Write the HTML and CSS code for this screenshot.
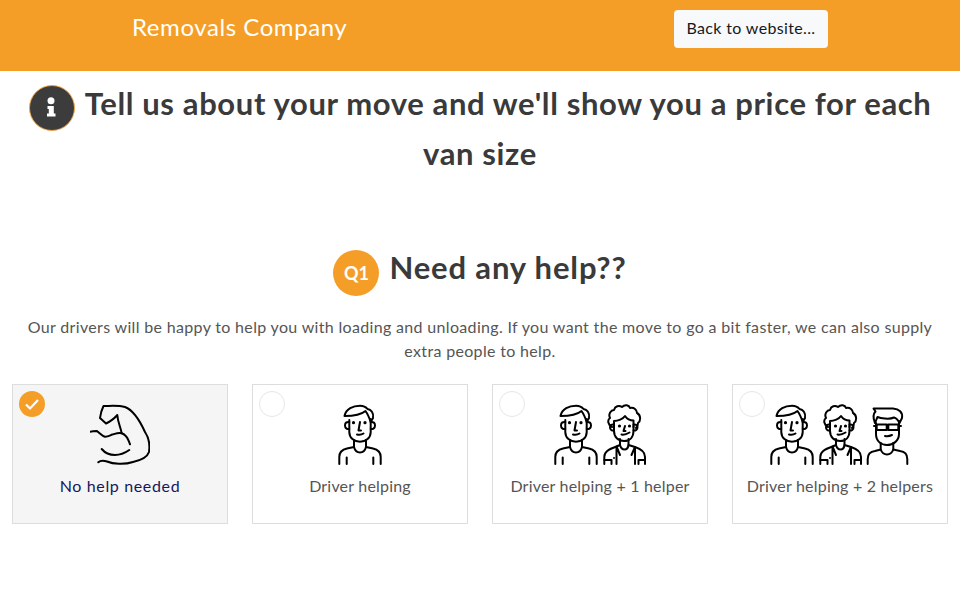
FILE: index.html
```html
<!DOCTYPE html>
<html lang="en">
<head>
<meta charset="utf-8">
<title>Removals Company</title>
<link rel="stylesheet" href="styles.css">
</head>
<body>
<svg class="defs" width="0" height="0" aria-hidden="true">
  <symbol id="man" viewBox="1 2 48 62">
    <g class="ink">
      <path d="M4.300 62V55C4.300 50 7.500 47.500 12 46.500L19 45C20 49 22 50.500 25 50.500C28 50.500 30 49 31 45L38 46.500C42.500 47.500 45.700 50 45.700 55V62"/>
      <path d="M11.700 55.500V62M38.300 55.500V62M19 38V45M31 38V45"/>
      <path d="M14.300 18V30C14.300 36 19 39.700 25 39.700C31 39.700 35.700 36 35.700 30V17"/>
      <path d="M9.500 14C11 7 18 3.700 25 3.700C29 3.700 31 5 32.500 7C36 7.500 39 11 38 16L35.700 20C34 15 32 11 30.500 9C27 12 18 14 9.500 14Z"/>
      <path d="M14.300 20C11.500 19.500 10 21 10 23.500C10 26 12 27.500 14.300 27M35.700 20C38.500 19.500 40 21 40 23.500C40 26 38 27.500 35.700 27"/>
      <path d="M25 20L23.500 28.500H26M22 32.500C24 33 27 32.500 28.500 31.500"/>
    </g>
    <circle class="dot" cx="18.500" cy="20.700" r="1.600"/>
    <circle class="dot" cx="30" cy="20.700" r="1.600"/>
  </symbol>
  <symbol id="curly" viewBox="1 2 48 62">
    <g class="ink">
      <path d="M13 25C9 23 8 18 11 16C9 12 12 8 15 8C16 4 20 3 23 5C26 2 30 3 31 6C35 5 38 8 38 11C42 13 42 19 39 21C39 23 38 25 37 26"/>
      <path d="M15 25V19C19 19 24 17 26 14C28 17 31 18.500 34.500 18.500V25"/>
      <path d="M15 24V29C15 35 19 39 25 39C31 39 34.500 35 34.500 29V24"/>
      <path d="M15 22.500C12.500 22 11 23.500 11 25.500C11 27.500 13 29 15 28.500M34.500 22.500C37 22 38.500 23.500 38.500 25.500C38.500 27.500 36.500 29 34.500 28.500"/>
      <path d="M26 24L24.500 29H26.500M22.500 32.500C25 33 28 32 30.500 30.500"/>
      <path d="M21 37V43M29.500 37V43"/>
      <path d="M5.300 62V55C5.300 50 9 47.500 17.500 44.500L21 43C22 46.500 23.500 47.500 25.500 47.500C27.500 47.500 29 46.500 29.500 43L36 45C42.500 47 46 50 46 55V62"/>
      <path d="M17.500 44.500L17.500 62M36 45V62M17.500 44.500L21 53M36 45L32.500 53M5.300 58H12.500V62M46 58H39.500V62"/>
    </g>
    <circle class="dot" cx="20.500" cy="24" r="1.600"/>
    <circle class="dot" cx="30.500" cy="24" r="1.600"/>
    <circle class="dot" cx="15" cy="56" r="1"/>
  </symbol>
  <symbol id="glasses" viewBox="1 2 48 62">
    <g class="ink">
      <path d="M4.700 62V57C4.700 52 7.500 49.500 12 49L17.700 47.500C19 51 21 52.500 24 52.500C27 52.500 29 51 30.300 47.500L37 49C41.500 49.500 44.300 52 44.300 57V62"/>
      <path d="M17.700 41V47.500M30.300 41V47.500"/>
      <path d="M13 21V32C13 39 18 43 24 43C30 43 36 39 36 32V19"/>
      <path d="M12 21C9.500 15 11 11 12.500 9.500L10.500 6.500H30C36 7 40 10 39 16L36.500 21C35 18 33 16 31 15.500C26 18 17 16 14.500 15C13.500 17 13 19 12 21Z"/>
      <path d="M13.700 22.500H23.700V28H13.700ZM25.300 22.500H35.300V28H25.300ZM23.700 24H25.300M13.700 24H11M35.300 24H38"/>
      <path d="M22 34C24.500 34.500 27 34 29 33"/>
    </g>
  </symbol>
</svg>

<header class="topbar">
  <span class="brand">Removals Company</span>
  <a class="back" href="#">Back to website...</a>
</header>

<main class="page">
  <h1 class="title">
    <svg class="info" viewBox="0 0 46 46" width="46" height="46" aria-hidden="true">
      <circle class="info-disc" cx="23" cy="23" r="22.500"/>
      <circle class="info-glyph" cx="22" cy="15.700" r="3.500"/>
      <path class="info-glyph" d="M18.500 21H24.800V28.500H26.500V31.500H18V28.500H19.800V24H18.500Z"/>
    </svg>
    Tell us about your move and we'll show you a price for each van size
  </h1>

  <h2 class="question"><span class="q-badge">Q1</span><span>Need any help??</span></h2>

  <p class="intro">Our drivers will be happy to help you with loading and unloading. If you want the move to go a bit faster, we can also supply extra people to help.</p>

  <div class="options">
    <div class="card selected">
      <span class="tick">
        <svg viewBox="0 0 26 26" width="26" height="26" aria-hidden="true"><path d="M7 13.500L11 17.500L19 9"/></svg>
      </span>
      <div class="art">
        <svg class="arm" viewBox="0 -1 60 62" width="60" height="62" aria-hidden="true">
          <g class="ink">
            <path d="M8.300 57.300C11 55 14 55.700 17 56.500C23 59 34 60 43 57C50 55.500 57 53 59 47C60 40 59 33 55 27C50 16 43 5 35 2C28 0 20 1 13.500 1C12 4 10.500 9 10 13L16 18.500C19 17 24 14 27.300 10C28 18 30 20 31.700 28.300"/>
            <path d="M0 26.700C2.500 26 4.500 26 6.700 26C9 27 12 31 15 31.700C18 32 21 29.700 23.300 29.300C26 28.500 29 27.500 31.700 28.300C35 29.500 37 32 38.300 35C39 36.500 39.500 38 40 39.300"/>
            <path d="M11.700 44C15 48 20 50 25 50C30 50 35 48 39.300 45"/>
          </g>
        </svg>
      </div>
      <span class="label">No help needed</span>
    </div>

    <div class="card">
      <span class="radio"></span>
      <div class="art">
        <svg class="person" aria-hidden="true"><use href="#man"/></svg>
      </div>
      <span class="label">Driver helping</span>
    </div>

    <div class="card">
      <span class="radio"></span>
      <div class="art">
        <svg class="person" aria-hidden="true"><use href="#man"/></svg>
        <svg class="person" aria-hidden="true"><use href="#curly"/></svg>
      </div>
      <span class="label">Driver helping + 1 helper</span>
    </div>

    <div class="card">
      <span class="radio"></span>
      <div class="art">
        <svg class="person" aria-hidden="true"><use href="#man"/></svg>
        <svg class="person" aria-hidden="true"><use href="#curly"/></svg>
        <svg class="person" aria-hidden="true"><use href="#glasses"/></svg>
      </div>
      <span class="label">Driver helping + 2 helpers</span>
    </div>
  </div>
</main>
</body>
</html>
```

FILE: styles.css
```css
* {
  box-sizing: border-box;
}

html, body {
  margin: 0;
  height: 600px;
  overflow: hidden;
  background: #fff;
}

body {
  font-family: "Lato", "Liberation Sans", sans-serif;
  color: #3a3a3a;
}

.defs {
  display: block;
  height: 0;
}

.topbar {
  height: 71px;
  background: #f59e27;
  display: flex;
  align-items: flex-start;
  justify-content: space-between;
  padding: 10px 132px 0;
}

.brand {
  color: #fff;
  font-size: 24px;
  line-height: 34px;
  letter-spacing: 0.57px;
}

.back {
  width: 154px;
  height: 38px;
  display: flex;
  align-items: center;
  justify-content: center;
  padding-bottom: 3px;
  background: #f8f9fa;
  border-radius: 4px;
  color: #16181b;
  font-size: 16px;
  letter-spacing: 0.35px;
  text-decoration: none;
}

.page {
  padding: 7px 12px 0;
}

.title {
  margin: 0;
  font-size: 31px;
  line-height: 50px;
  font-weight: 700;
  text-align: center;
  letter-spacing: 0.63px;
  color: #3a3a3a;
}

.info {
  vertical-align: -6px;
  margin: -10px 3px -10px 0;
}

.info-disc {
  fill: #3c3c3c;
  stroke: #f0a64a;
  stroke-width: 1;
}

.info-glyph {
  fill: #fff;
}

.question {
  margin: 72px 0 0;
  display: flex;
  justify-content: center;
  align-items: flex-start;
  gap: 10px;
  font-size: 31px;
  line-height: 34px;
  font-weight: 700;
  letter-spacing: 0.85px;
  color: #3a3a3a;
}

.q-badge {
  width: 46px;
  height: 46px;
  border-radius: 50%;
  background: #f59e27;
  color: #fff;
  font-size: 18px;
  letter-spacing: 0;
  line-height: 46px;
  text-align: center;
}

.intro {
  margin: 19px 0 0;
  font-size: 16px;
  line-height: 24px;
  text-align: center;
  color: #555;
  letter-spacing: 0.33px;
}

.options {
  margin-top: 21px;
  display: grid;
  grid-template-columns: repeat(4, 1fr);
  gap: 24px;
}

.card {
  position: relative;
  height: 140px;
  padding-top: 19px;
  background: #fff;
  border: 1px solid #ddd;
  display: flex;
  flex-direction: column;
  align-items: center;
}

.card.selected {
  background: #f5f5f5;
}

.art {
  display: flex;
  justify-content: center;
  height: 62px;
}

.person {
  width: 48px;
  height: 62px;
}

.ink {
  fill: none;
  stroke: #000;
  stroke-width: 2;
  stroke-linecap: round;
  stroke-linejoin: round;
}

.person .ink {
  stroke-linecap: butt;
}

.dot {
  fill: #000;
}

.label {
  margin-top: 8px;
  font-size: 16px;
  line-height: 24px;
  letter-spacing: 0.2px;
  color: #555;
  white-space: nowrap;
}

.selected .label {
  color: #14195a;
  letter-spacing: 0.64px;
}

.tick,
.radio {
  position: absolute;
  top: 6px;
  left: 6px;
  width: 26px;
  height: 26px;
  border-radius: 50%;
}

.tick {
  background: #f59e27;
}

.tick svg {
  display: block;
  fill: none;
  stroke: #fff;
  stroke-width: 2.200;
}

.radio {
  background: #fff;
  border: 1px solid #e6e6e6;
}
```
